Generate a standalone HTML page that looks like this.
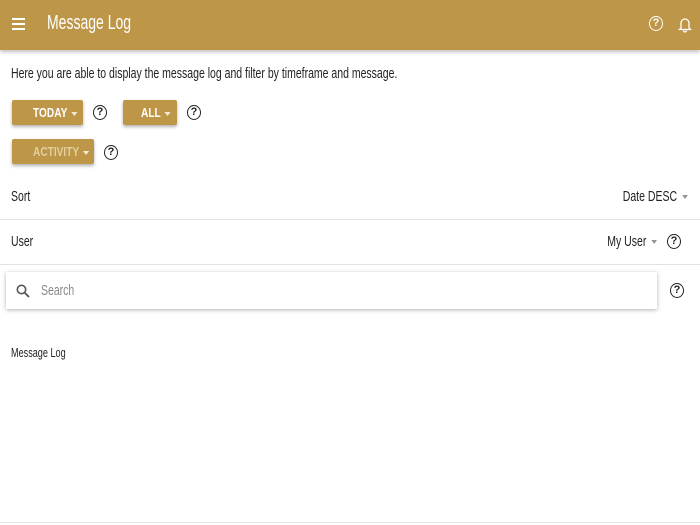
<!DOCTYPE html>
<html><head><style>
body{margin:0;width:700px;height:525px;overflow:hidden;background:#fff;font-family:"Liberation Sans",sans-serif;color:#222;position:relative}
.a{position:absolute;white-space:nowrap}
.c{transform:scaleX(.70);transform-origin:left center}
.cr{transform:scaleX(.70);transform-origin:right center}
.cc{display:inline-block;transform:scaleX(.78);transform-origin:left center;white-space:nowrap;position:absolute;top:0}
.hdr{left:0;top:0;width:700px;height:50px;background:#bd9648;box-shadow:0 2px 4px rgba(0,0,0,.25)}
.btn{position:absolute;height:25px;background:#bd9648;border-radius:2px;box-shadow:0 2px 3px rgba(0,0,0,.3);color:#fff;font-size:13px;font-weight:bold;line-height:25px;white-space:nowrap}
.tri{display:inline-block;width:0;height:0;border-left:4px solid transparent;border-right:4px solid transparent;border-top:4px solid currentColor;vertical-align:middle;margin-left:5px;opacity:.8}
.q{position:absolute;width:12px;height:13px;border:1.6px solid #222;border-radius:50%;font-size:11px;line-height:13px;text-align:center;font-weight:bold}
.line{left:0;width:700px;height:1px;background:#e2e2e2}
.t{font-size:15px}
</style></head><body>
<div class="a hdr"></div>
<div class="a" style="left:12px;top:18px;width:13px;height:2px;background:#fff;box-shadow:0 5px 0 #fff,0 10px 0 #fff"></div>
<div class="a" style="left:47px;top:12px;color:#fff;font-size:20px;transform:scaleX(.7);transform-origin:left center">Message Log</div>
<div class="q" style="left:649px;top:16px;border-color:#fff;color:#fff">?</div>
<svg class="a" style="left:678px;top:16px" width="14" height="17" viewBox="0 0 14 17"><path d="M3 12V7a4 4 0 0 1 8 0v5l1.5 1.5h-11z M5.5 14.5a1.5 1.5 0 0 0 3 0" fill="none" stroke="#fff" stroke-width="1.3"/></svg>
<div class="a t c" style="left:11px;top:65px">Here you are able to display the message log and filter by timeframe and message.</div>
<div class="btn" style="left:12px;top:100px;width:71px"><span class="cc" style="left:21px">TODAY<span class="tri"></span></span></div>
<div class="q" style="left:93px;top:105px">?</div>
<div class="btn" style="left:123px;top:100px;width:54px"><span class="cc" style="left:18px">ALL<span class="tri"></span></span></div>
<div class="q" style="left:187px;top:105px">?</div>
<div class="btn" style="left:12px;top:139px;width:82px;color:#e3cf9e"><span class="cc" style="left:21px">ACTIVITY<span class="tri" style="color:#fff"></span></span></div>
<div class="q" style="left:104px;top:145px">?</div>
<div class="a t c" style="left:11px;top:188px">Sort</div>
<div class="a t cr" style="right:12px;top:188px">Date DESC<span class="tri" style="color:#777;margin-left:7px"></span></div>
<div class="a line" style="top:219px"></div>
<div class="a t c" style="left:11px;top:233px">User</div>
<div class="a t cr" style="right:43px;top:233px">My User<span class="tri" style="color:#777;margin-left:7px"></span></div>
<div class="q" style="left:667px;top:234px">?</div>
<div class="a line" style="top:264px"></div>
<div class="a" style="left:6px;top:272px;width:651px;height:37px;background:#fff;box-shadow:0 1px 4px rgba(0,0,0,.3)"></div>
<svg class="a" style="left:16px;top:284px" width="14" height="14" viewBox="0 0 14 14"><circle cx="5.5" cy="5.5" r="4.2" fill="none" stroke="#555" stroke-width="1.6"/><path d="M8.6 8.6L13 13" stroke="#555" stroke-width="1.8"/></svg>
<div class="a t c" style="left:41px;top:282px;color:#888">Search</div>
<div class="q" style="left:670px;top:283px">?</div>
<div class="a c" style="left:11px;top:345px;font-size:13px">Message Log</div>
<div class="a line" style="top:522px"></div>
</body></html>
